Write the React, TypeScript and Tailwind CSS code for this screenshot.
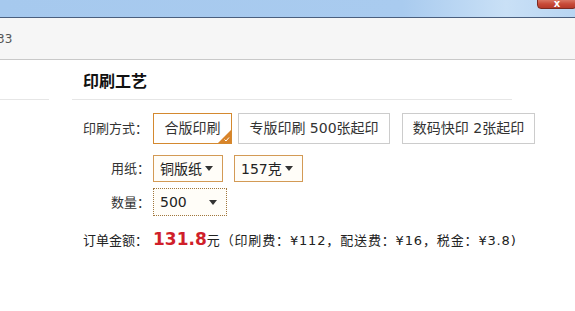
import React from "react";

const font = { fontFamily: '"DejaVu Sans", "Noto Sans CJK SC", sans-serif' };

function Caret() {
  return (
    <svg width="8" height="5" viewBox="0 0 8 5" className="shrink-0">
      <path d="M0 0 L8 0 L4 5 Z" fill="#333" />
    </svg>
  );
}

function Select({ label, w, dotted }: { label: string; w: string; dotted?: boolean }) {
  return (
    <div
      className={`shrink-0 flex items-center justify-between pl-[6px] pr-[9px] bg-[#fffdf8] ${w} ${
        dotted ? "h-[28px] border border-dotted border-[#a0763c]" : "h-[27px] border border-[#d39a55]"
      }`}
    >
      <span className="text-[14px] leading-none text-[#222]">{label}</span>
      <Caret />
    </div>
  );
}

export default function App() {
  return (
    <div className="w-[575px] h-[311px] bg-white overflow-hidden text-[#333]" style={font}>
      {/* title bar */}
      <div className="relative h-[18px] border-b border-[#4a5f7e] bg-[linear-gradient(90deg,#a6c9ee_0%,#a9cbef_70%,#c9e0f6_88%,#b8d5f2_100%)]">
        <div className="absolute right-[-2px] top-[-3px] w-[40px] h-[12px] rounded-b-[4px] border border-[#7b2a22] bg-[linear-gradient(180deg,#e08a78_0%,#c84a38_60%,#b53a2a_100%)] flex items-center justify-center">
          <span className="text-white text-[10px] leading-none font-bold mt-[1px]">x</span>
        </div>
      </div>
      {/* grey bar */}
      <div className="h-[42px] bg-[#f6f6f6] border-b border-[#c9c9c9] flex items-center">
        <span className="ml-[-3px] mt-[1px] text-[12px] text-[#555]">33</span>
      </div>
      {/* content */}
      <div className="flex">
        <div className="shrink-0 w-[49px] h-[40px] border-b border-[#e6e6e6]" />
        <div className="shrink-0 ml-[23px] w-[440px]">
          <div className="h-[40px] border-b border-[#e6e6e6] pl-[11px] pt-[10px]">
            <span className="text-[16px] leading-[22px] font-bold text-[#111]">印刷工艺</span>
          </div>

          <div className="pl-[11px] pt-[13px]">
            {/* row 1 */}
            <div className="flex items-center w-[520px]">
              <div className="shrink-0 w-[70px] text-[13px] leading-none text-[#333]">印刷方式：</div>
              <div className="shrink-0 relative h-[31px] w-[79px] border border-[#d4892f] flex items-center justify-center text-[14px] text-[#333]">
                合版印刷
                <svg className="absolute right-0 bottom-0" width="13" height="13" viewBox="0 0 13 13">
                  <path d="M13 0 L13 13 L0 13 Z" fill="#d8842a" />
                  <path d="M6.5 9.5 L8 11 L11 7.5" stroke="#fff" strokeWidth="1" fill="none" />
                </svg>
              </div>
              <div className="shrink-0 ml-[6px] h-[31px] w-[152px] border border-[#cccccc] flex items-center justify-center text-[14px] text-[#333] whitespace-nowrap">
                专版印刷 500张起印
              </div>
              <div className="shrink-0 ml-[12px] h-[31px] w-[133px] border border-[#cccccc] flex items-center justify-center text-[14px] text-[#333] whitespace-nowrap">
                数码快印 2张起印
              </div>
            </div>

            {/* row 2 */}
            <div className="flex items-center mt-[11px]">
              <div className="shrink-0 w-[70px] text-right pr-[3px] text-[13px] leading-none">用纸：</div>
              <Select label="铜版纸" w="w-[70px]" />
              <div className="ml-[11px]">
                <Select label="157克" w="w-[69px]" />
              </div>
            </div>

            {/* row 3 */}
            <div className="flex items-center mt-[6px]">
              <div className="shrink-0 w-[70px] text-right pr-[3px] text-[13px] leading-none">数量：</div>
              <Select label="500" w="w-[74px]" dotted />
            </div>

            {/* order */}
            <div className="flex items-baseline mt-[15px] text-[13px] text-[#222] whitespace-nowrap">
              <span className="shrink-0 w-[70px]">订单金额：</span>
              <span className="text-[17px] font-bold text-[#d01f2a] leading-none">131.8</span>
              <span className="tracking-[0.85px]">元（印刷费：¥112，配送费：¥16，税金：¥3.8)</span>
            </div>
          </div>
        </div>
      </div>
    </div>
  );
}
